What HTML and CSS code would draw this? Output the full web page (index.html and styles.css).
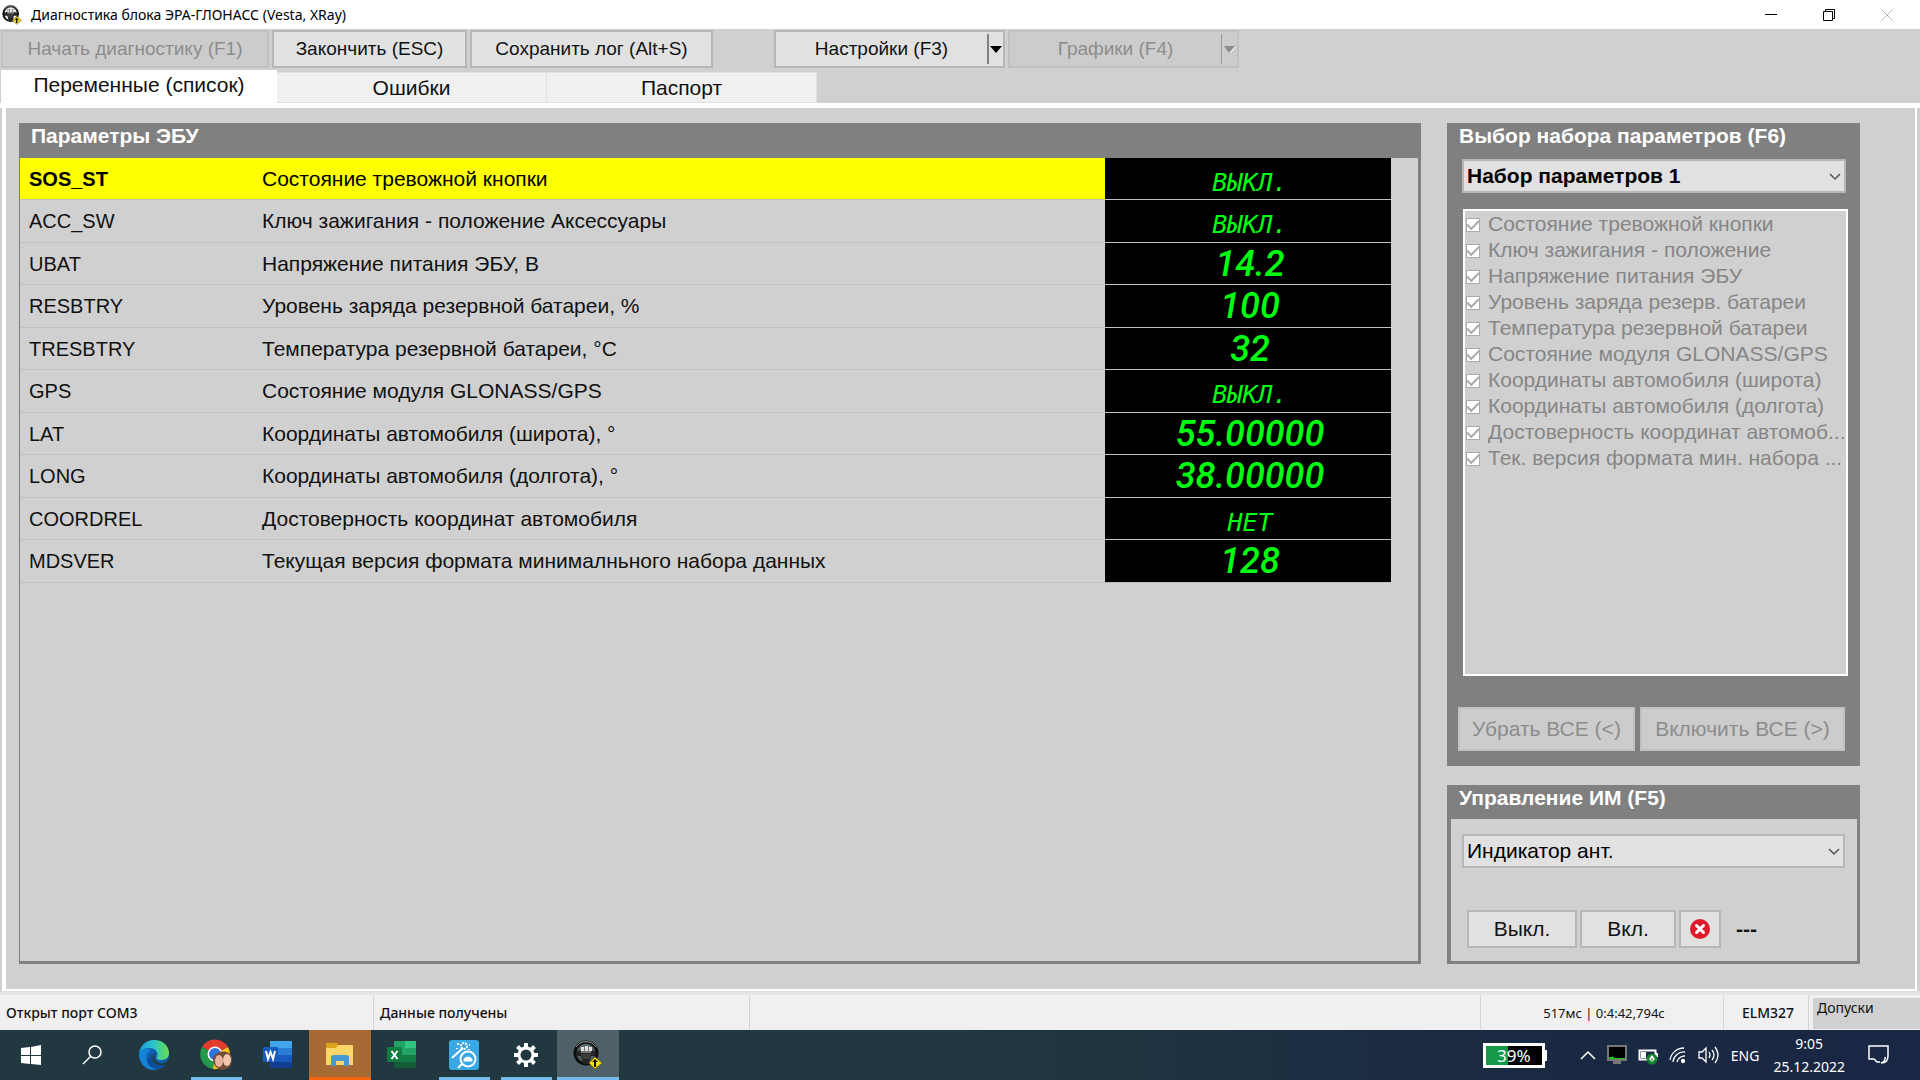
FILE: index.html
```html
<!DOCTYPE html>
<html lang="ru">
<head>
<meta charset="utf-8">
<meta name="viewport" content="width=device-width, initial-scale=1">
<title>Диагностика блока ЭРА-ГЛОНАСС (Vesta, XRay)</title>
<link rel="stylesheet" href="styles.css">
</head>
<body>
<svg width="0" height="0" class="sprite" aria-hidden="true">
  <symbol id="wheel" viewBox="0 0 30 30">
    <circle cx="13" cy="13" r="11" fill="none" stroke="#0c0c0c" stroke-width="3"/>
    <path d="M3 7a12 12 0 0 1 20 0" fill="none" stroke="#9c9c9c" stroke-width="1"/>
    <path d="M3 12c4-3 16-3 20 0v4h-5l-2 8h-6l-2-8H3z" fill="#242424"/>
    <path d="M7 8c2-3 10-3 12 0l-1 5H8z" fill="#777"/>
    <path d="M8 7h3v4H8zM12 6h3v5h-3zM16 7h3v4h-3z" fill="#ddd"/>
    <path d="M8 14h10l-2 5h-6z" fill="#3c3c3c"/>
    <path d="M22 17l7 6-7 6-6-6z" fill="#f4dc18" stroke="#80700a"/>
    <path d="M22 19l3 3h-2v5h-2v-5h-2z" fill="#111"/>
  </symbol>
  <symbol id="chevron" viewBox="0 0 12 8"><path d="M1 1l5 5 5-5" fill="none" stroke="#555" stroke-width="1.5"/></symbol>
</svg>

<header class="titlebar">
  <svg class="app-icon"><use href="#wheel"/></svg>
  <h1>Диагностика блока ЭРА-ГЛОНАСС (Vesta, XRay)</h1>
  <div class="window-controls">
    <button aria-label="Свернуть"><svg width="12" height="12"><path d="M0 5.500h12" stroke="#000"/></svg></button>
    <button aria-label="Восстановить"><svg width="12" height="12" fill="none" stroke="#000"><path d="M.5 2.500h9v9h-9zM2.500 2.500v-2h9v9h-2"/></svg></button>
    <button aria-label="Закрыть" disabled><svg width="12" height="12"><path d="M0 0l12 12M12 0L0 12" stroke="#bbb"/></svg></button>
  </div>
</header>

<nav class="toolbar">
  <button class="btn tool-start" disabled>Начать диагностику (F1)</button>
  <button class="btn tool-stop">Закончить (ESC)</button>
  <button class="btn tool-log">Сохранить лог (Alt+S)</button>
  <button class="btn split"><span>Настройки (F3)</span><i><svg width="12" height="7"><path d="M0 0h12L6 7z" fill="#000"/></svg></i></button>
  <button class="btn split" disabled><span>Графики (F4)</span><i><svg width="12" height="7"><path d="M0 0h11L5 7z" fill="#8e8e8e"/><path d="M11 1L6 7" stroke="#fff"/></svg></i></button>
</nav>

<nav class="tabs" role="tablist">
  <button role="tab" aria-selected="true">Переменные (список)</button>
  <button role="tab" aria-selected="false">Ошибки</button>
  <button role="tab" aria-selected="false">Паспорт</button>
</nav>

<main class="page">
  <section class="panel params">
    <h2>Параметры ЭБУ</h2>
    <div class="panel-body">
      <table>
        <tr class="selected"><td>SOS_ST</td><td>Состояние тревожной кнопки</td><td class="lcd word">ВЫКЛ.</td></tr>
        <tr><td>ACC_SW</td><td>Ключ зажигания - положение Аксессуары</td><td class="lcd word">ВЫКЛ.</td></tr>
        <tr><td>UBAT</td><td>Напряжение питания ЭБУ, В</td><td class="lcd">14.2</td></tr>
        <tr><td>RESBTRY</td><td>Уровень заряда резервной батареи, %</td><td class="lcd">100</td></tr>
        <tr><td>TRESBTRY</td><td>Температура резервной батареи, °С</td><td class="lcd">32</td></tr>
        <tr><td>GPS</td><td>Состояние модуля GLONASS/GPS</td><td class="lcd word">ВЫКЛ.</td></tr>
        <tr><td>LAT</td><td>Координаты автомобиля (широта), °</td><td class="lcd">55.00000</td></tr>
        <tr><td>LONG</td><td>Координаты автомобиля (долгота), °</td><td class="lcd">38.00000</td></tr>
        <tr><td>COORDREL</td><td>Достоверность координат автомобиля</td><td class="lcd word">НЕТ</td></tr>
        <tr><td>MDSVER</td><td>Текущая версия формата минималньного набора данных</td><td class="lcd">128</td></tr>
      </table>
    </div>
  </section>

  <aside class="side">
    <section class="panel sets">
      <h2><label for="set">Выбор набора параметров (F6)</label></h2>
      <div class="combo bold">
        <select id="set"><option>Набор параметров 1</option></select>
        <svg><use href="#chevron"/></svg>
      </div>
      <ul class="checks">
        <li><label><input type="checkbox" checked disabled><span>Состояние тревожной кнопки</span></label></li>
        <li><label><input type="checkbox" checked disabled><span>Ключ зажигания - положение</span></label></li>
        <li><label><input type="checkbox" checked disabled><span>Напряжение питания ЭБУ</span></label></li>
        <li><label><input type="checkbox" checked disabled><span>Уровень заряда резерв. батареи</span></label></li>
        <li><label><input type="checkbox" checked disabled><span>Температура резервной батареи</span></label></li>
        <li><label><input type="checkbox" checked disabled><span>Состояние модуля GLONASS/GPS</span></label></li>
        <li><label><input type="checkbox" checked disabled><span>Координаты автомобиля (широта)</span></label></li>
        <li><label><input type="checkbox" checked disabled><span>Координаты автомобиля (долгота)</span></label></li>
        <li><label><input type="checkbox" checked disabled><span>Достоверность координат автомоб...</span></label></li>
        <li><label><input type="checkbox" checked disabled><span>Тек. версия формата мин. набора ...</span></label></li>
      </ul>
      <div class="set-actions">
        <button class="btn" disabled>Убрать ВСЕ (&lt;)</button>
        <button class="btn" disabled>Включить ВСЕ (&gt;)</button>
      </div>
    </section>

    <section class="panel control">
      <h2><label for="device">Управление ИМ (F5)</label></h2>
      <div class="panel-body">
        <div class="combo">
          <select id="device"><option>Индикатор ант.</option></select>
          <svg><use href="#chevron"/></svg>
        </div>
        <div class="control-actions">
          <button class="btn off">Выкл.</button>
          <button class="btn on">Вкл.</button>
          <button class="btn cancel" aria-label="Отмена"><svg width="20" height="20"><circle cx="10" cy="10" r="10" fill="#e01b2b"/><path d="M6.500 6.500l7 7M13.500 6.500l-7 7" stroke="#fff" stroke-width="3" stroke-linecap="round"/></svg></button>
          <output>---</output>
        </div>
      </div>
    </section>
  </aside>
</main>

<footer class="status">
  <span class="st-port">Открыт порт COM3</span>
  <span class="st-data">Данные получены</span>
  <span class="st-time">517мс | 0:4:42,794с</span>
  <span class="st-adapter">ELM327</span>
  <span class="st-tol">Допуски</span>
</footer>

<div class="taskbar">
  <button class="task start" aria-label="Пуск"><svg width="20" height="20" fill="#fff"><path d="M0 3l9-1v8H0zM10 2l10-2v10H10zM0 11h9v8l-9-1zM10 11h10v9l-10-1z"/></svg></button>
  <button class="task search" aria-label="Поиск"><svg width="20" height="20" fill="none" stroke="#fff" stroke-width="1.5"><circle cx="13" cy="7" r="6"/><path d="M8.500 11.500L1 19"/></svg></button>
  <button class="task" aria-label="Edge"><svg width="30" height="30" viewBox="0 0 30 30">
    <defs><linearGradient id="eg" x1="0" y1="0" x2="1" y2="0"><stop offset="0" stop-color="#1c9fe0"/><stop offset=".5" stop-color="#2cc4c8"/><stop offset="1" stop-color="#6be04a"/></linearGradient></defs>
    <circle cx="15" cy="15" r="15" fill="#0f5fae"/>
    <path d="M0 14C1 5 8 0 15 0c9 0 15 6 15 13 0 5-4 7-8 7-3 0-5-1-4-3 2-5-2-9-7-9-6 0-10 3-11 6z" fill="url(#eg)"/>
    <path d="M0 14c2-5 8-6 12-4-5 3-6 9-3 14 2 3 5 5 8 6C8 31 0 24 0 14z" fill="#1482d6"/>
    <path d="M17 12c-3 3-2 9 3 11 3 1 6 0 9-3l1 5H17c-5-3-5-10 0-13z" fill="#213840"/>
    <path d="M9 24c4 5 12 5 17 1-8 1-14-3-13-10-4 2-5 6-4 9z" fill="#104c95"/></svg></button>
  <button class="task running" aria-label="Chrome"><svg width="32" height="32" viewBox="0 0 32 32">
    <path d="M15 15L2 8A15 15 0 0 1 28 8z" fill="#e33b2e"/><path d="M15 15L2 8a15 15 0 0 0 11 22z" fill="#229a4b"/><path d="M15 15l13-7a15 15 0 0 1-15 22z" fill="#fbc116"/>
    <circle cx="15" cy="15" r="7.500" fill="#fff"/><circle cx="15" cy="15" r="6" fill="#2b74e2"/>
    <path d="M13 19c3-8 17-9 19 0 0 8-4 12-10 12-6-1-9-6-9-12z" fill="#744c38"/><ellipse cx="19" cy="22" rx="4" ry="6" fill="#e6b59c"/><ellipse cx="27" cy="21" rx="4" ry="6" fill="#efc6ad"/></svg></button>
  <button class="task" aria-label="Word"><svg width="30" height="28" viewBox="0 0 30 28"><path d="M7 0h22v7H7z" fill="#41a5ee"/><path d="M7 7h22v7H7z" fill="#2b7cd3"/><path d="M7 14h22v7H7z" fill="#185abd"/><path d="M7 21h22v6H7z" fill="#103f91"/><rect y="6" width="15" height="15" rx="1" fill="#185abd"/><path d="M3 10l2 8 2.500-7L10 18l2-8" fill="none" stroke="#fff" stroke-width="2"/></svg></button>
  <button class="task explorer" aria-label="Проводник"><svg width="28" height="24" viewBox="0 0 28 24"><path d="M0 0h11l2 3h14v5H0z" fill="#dca21c"/><path d="M0 5h10l2-3h15v20H0z" fill="#fbd668"/><path d="M5 23V15q0-3 3-3h12q3 0 3 3v8h-5v-5h-8v5z" fill="#4799d2"/></svg></button>
  <button class="task" aria-label="Excel"><svg width="30" height="28" viewBox="0 0 30 28"><path d="M7 0h22v27H7z" fill="#21a366"/><path d="M18 0h11v7H18z" fill="#33c481"/><path d="M7 14h22v7H7z" fill="#107c41"/><path d="M7 21h22v6H7z" fill="#185c37"/><rect y="6" width="15" height="15" rx="1" fill="#107c41"/><path d="M4.500 10l6 8M10.500 10l-6 8" stroke="#fff" stroke-width="2"/></svg></button>
  <button class="task running" aria-label="Подбор"><svg width="30" height="30" viewBox="0 0 30 30"><rect width="30" height="30" rx="3" fill="#38a9e4"/><g fill="none" stroke="#fff" stroke-width="2"><circle cx="19" cy="19" r="7.500"/><path d="M13 24l-4 4M3 18L14 8"/><path d="M15 19q4-4 8 0v2h-8z" fill="#fff" stroke-width="1"/><circle cx="15" cy="6" r="3" stroke-dasharray="2 1"/></g><path d="M8 3h2v2H8zM20 4h1v2h-1zM19 9h2v1h-2zM7 8h2v1H7z" fill="#fff"/></svg></button>
  <button class="task running" aria-label="Параметры"><svg width="24" height="24" viewBox="0 0 24 24" fill="none" stroke="#fff"><circle cx="12" cy="12" r="7" stroke-width="3"/><path d="M12 0v5M12 19v5M0 12h5M19 12h5M3.500 3.500L7 7M17 17l3.500 3.500M20.500 3.500L17 7M7 17l-3.500 3.500" stroke-width="4"/></svg></button>
  <button class="task active" aria-label="Диагностика"><svg width="30" height="30"><use href="#wheel"/></svg></button>

  <div class="tray">
    <span class="battery-box"><span style="width:39%"></span><b>39%</b></span>
    <svg width="16" height="10" fill="none" stroke="#fff" stroke-width="1.500"><path d="M1 9l7-7 7 7"/></svg>
    <svg width="20" height="20"><path d="M1 1h18v14H1z" stroke="#777" stroke-width="2"/><path d="M6 16h8v3H6z" fill="#777"/><path d="M2 14v-2h3l1-1 1 2h11v1z" fill="#19c81c"/></svg>
    <svg width="20" height="20"><path d="M1.500 5.500h16v9h-16z" fill="none" stroke="#fff" stroke-width="2"/><path d="M3 7h5v6H3zM18 8h2v4h-2z" fill="#fff"/><circle cx="14" cy="14" r="5.500" fill="#14802d"/><path d="M14 10l3 4-3 3-3-3z" fill="#fff"/><path d="M14 13v3" stroke="#14802d"/></svg>
    <svg width="18" height="18" fill="none" stroke="#fff" stroke-width="1.300"><path d="M1 14A14 14 0 0 1 15 2M4 16A11 11 0 0 1 16 6M8 16a8 8 0 0 1 8-6"/><circle cx="14" cy="15" r="1.500" fill="#fff"/></svg>
    <svg width="22" height="18" fill="none" stroke="#fff" stroke-width="1.300"><path d="M1 6h3l4-4v14l-4-4H1zM11 6q2 3 0 6M14 4q4 5 0 10M17 1q6 8 0 16"/></svg>
    <span class="lang">ENG</span>
    <time>9:05<br>25.12.2022</time>
    <svg class="notify" width="22" height="22" fill="none" stroke="#fff" stroke-width="1.500"><path d="M12 18H9l-3-3H1V2h19v10M20 12q0 7-7 7 5-2 4-6"/></svg>
  </div>
</div>
</body>
</html>
```
FILE: styles.css
```css
* { box-sizing: border-box; }

body {
  margin: 0;
  min-height: 100vh;
  display: flex;
  flex-direction: column;
  background: #d0d0d0;
  color: #111;
  font: 21px/26px "Liberation Sans", Arial, sans-serif;
}

button, select { font: inherit; color: inherit; margin: 0; }
svg { display: block; flex: none; }
.sprite { position: absolute; }
h1, h2, ul { margin: 0; padding: 0; }

/* title bar */
.titlebar {
  height: 29px;
  display: flex;
  align-items: center;
  gap: 9px;
  padding: 0 4px 0 2px;
  background: #fff;
}
.app-icon { width: 20px; height: 20px; }
.titlebar h1 { font: 14px/20px "Noto Sans", sans-serif; color: #000; }
.window-controls { margin-left: auto; display: flex; }
.window-controls button {
  width: 58px;
  height: 28px;
  padding: 0;
  border: 0;
  background: none;
  display: grid;
  place-items: center;
}

/* buttons and toolbar */
.btn {
  padding: 0;
  border: 2px solid #b6b6b6;
  background: #e1e1e1;
}
.btn:disabled { border-color: #c1c1c1; background: #ccc; color: #8c8c8c; }
.toolbar {
  display: flex;
  gap: 3px;
  padding: 1px 1px 2px;
  font-size: 19px;
}
.toolbar .btn { height: 38px; }
.toolbar .tool-start { width: 268px; }
.toolbar .tool-stop { width: 195px; }
.toolbar .tool-log { width: 243px; margin-right: 58px; }
.toolbar .split { width: 231px; display: flex; align-items: center; }
.split span { flex: 1; }
.split i {
  height: 30px;
  width: 16px;
  border-left: 2px solid #808080;
  display: grid;
  place-items: center;
}
.split:disabled i { border-left: 1px solid #999; }

/* tabs */
.tabs {
  display: flex;
  align-items: flex-end;
  border-bottom: 5px solid #fff;
  padding-left: 1px;
}
.tabs button {
  width: 270px;
  height: 31px;
  padding: 0;
  border: solid #e0e0e0;
  border-width: 1px 1px 1px 0;
  background: #f0f0f0;
}
.tabs button[aria-selected="true"] {
  width: 276px;
  height: 33px;
  padding-bottom: 4px;
  border: 0;
  background: #fff;
}

/* work area */
.page {
  flex: 1;
  display: flex;
  gap: 26px;
  padding: 15px 55px 25px 13px;
  margin: 0 3px 0 2px;
  border: solid #fff;
  border-width: 0 2px 2px 4px;
}
.panel { background: #808080; display: flex; flex-direction: column; }
.panel h2 {
  font-size: 21px;
  line-height: 26px;
  height: 34px;
  padding-left: 12px;
  color: #fff;
}
.panel-body { background: #d0d0d0; flex: 1; }
.params { flex: 1; }
.params .panel-body { margin: 0 3px 3px 1px; }
.params h2 { height: 35px; }
.side { width: 413px; display: flex; flex-direction: column; gap: 19px; }

table {
  width: calc(100% - 27px);
  height: 425px;
  border-collapse: collapse;
  table-layout: fixed;
}
td { padding: 0 0 0 9px; border-bottom: 1px solid #c0c0c0; white-space: nowrap; }
td:first-child { width: 233px; font-size: 20px; }
.selected { background: #ff0; color: #000; }
.selected td:first-child { font-weight: bold; }
.lcd {
  width: 286px;
  padding: 0 0 0 4px;
  background: #000;
  color: #0f1;
  text-align: center;
  font: italic 500 36px/30px Roboto, sans-serif;
}
.lcd.word {
  padding-top: 8px;
  font: italic 25px/22px "DejaVu Sans Mono", monospace;
}

/* parameter set panel */
.combo { position: relative; height: 34px; }
.combo select {
  width: 100%;
  height: 100%;
  padding: 0 30px 0 3px;
  border: 2px solid #b6b6b6;
  border-radius: 0;
  background: #e1e1e1;
  appearance: none;
  color: #000;
  opacity: 1;
}
.combo svg {
  position: absolute;
  right: 5px;
  top: 14px;
  width: 12px;
  height: 8px;
  pointer-events: none;
}
.bold { font-weight: bold; }
.sets { flex: 1; }
.sets .combo { margin: 2px 14px 16px 15px; }
.checks {
  flex: 1;
  margin: 0 12px 0 16px;
  border: 2px solid #fff;
  background: #d0d0d0;
  list-style: none;
  color: #868686;
  display: grid;
  grid-template-rows: repeat(10, 26px);
  align-content: start;
}
.checks label {
  display: flex;
  align-items: center;
  gap: 8px;
  padding-left: 1px;
  white-space: nowrap;
}
.checks input {
  flex: none;
  appearance: none;
  width: 14px;
  height: 14px;
  margin: 2px 0 0;
  border: 1px solid #aaa;
  background: #fff;
  display: grid;
  place-items: center;
}
.checks input::after {
  content: "";
  width: 10px;
  height: 5px;
  margin-bottom: 3px;
  border: solid #aaa;
  border-width: 0 0 2px 2px;
  transform: rotate(-45deg);
}
.set-actions {
  display: grid;
  grid-template-columns: 177px 1fr;
  gap: 5px;
  padding: 31px 15px 15px 11px;
}
.set-actions .btn { height: 44px; }

/* actuator panel */
.control .panel-body { margin: 0 3px 3px 4px; padding: 15px 12px 13px 11px; }
.control-actions { display: flex; align-items: center; gap: 3px; padding: 42px 0 0 5px; }
.control-actions .btn { height: 38px; }
.control-actions .off { width: 110px; }
.control-actions .on { width: 96px; }
.control-actions .cancel { width: 42px; display: grid; place-items: center; }
output { margin-left: 12px; font-weight: bold; }

/* status bar */
.status {
  display: flex;
  height: 39px;
  padding-top: 3px;
  border-top: 1px solid #e0e0e0;
  background: linear-gradient(#e4e4e4 3px, #f0f0f0 3px);
  font: 14px/36px "Noto Sans", sans-serif;
}
.status span { border-right: 1px solid #d4d4d4; }
.st-port { width: 374px; padding-left: 6px; font-weight: 500; }
.st-data { width: 376px; padding-left: 6px; font-weight: 500; }
.st-time { width: 244px; margin-left: auto; padding-left: 4px; text-align: center; font-size: 13px; }
.status .st-time { border-left: 1px solid #d4d4d4; }
.st-adapter { width: 85px; padding-left: 4px; text-align: center; font-weight: 500; }
.status .st-tol {
  width: 107px;
  margin: 3px 0 1px 4px;
  padding-left: 4px;
  border: 0;
  background: #d0d0d0;
  line-height: 20px;
}

/* taskbar */
.taskbar {
  height: 50px;
  display: flex;
  background: linear-gradient(90deg, #213840 50%, #1b2b42 75%, #192644);
  color: #fff;
}
.task {
  width: 62px;
  padding: 0;
  border: 0;
  background: none;
  display: grid;
  place-items: center;
}
.start, .search { width: 61px; }
.search { margin-right: 1px; }
.running { background: linear-gradient(#76b9ed, #76b9ed) bottom / 51px 3px no-repeat; }
.active { background: #4f6168; border-bottom: 3px solid #76b9ed; padding-top: 3px; }
.explorer { background: #a76a35; border-bottom: 3px solid #f7630c; padding-top: 3px; }
.tray {
  margin-left: auto;
  display: flex;
  align-items: center;
  gap: 11px;
  padding-right: 30px;
  font: 14px/23px "Noto Sans", sans-serif;
}
.battery-box {
  position: relative;
  width: 62px;
  height: 25px;
  margin-right: 24px;
  border: 3px solid #fff;
  background: #000;
  text-align: center;
}
.battery-box::after {
  content: "";
  position: absolute;
  right: -5px;
  top: 4px;
  width: 3px;
  height: 11px;
  background: #fff;
}
.battery-box span { display: block; height: 100%; background: #169a49; }
.battery-box b { position: absolute; inset: 0; font-weight: 400; font-size: 17px; line-height: 19px; }
time { text-align: center; margin-left: 3px; }
.notify { margin-left: 12px; }
```
